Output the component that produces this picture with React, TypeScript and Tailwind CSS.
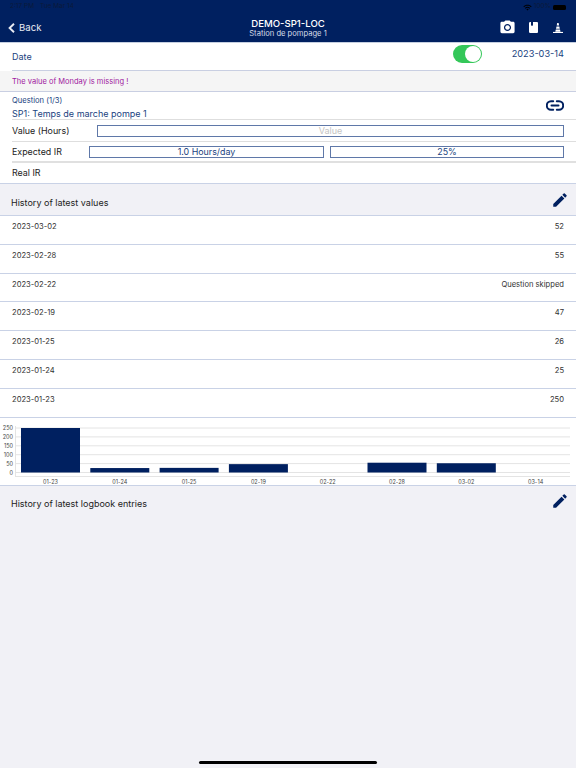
import React from "react";
import { MdEdit, MdPhotoCamera, MdWifi } from "react-icons/md";

const history: [string, string][] = [
  ["2023-03-02", "52"],
  ["2023-02-28", "55"],
  ["2023-02-22", "Question skipped"],
  ["2023-02-19", "47"],
  ["2023-01-25", "26"],
  ["2023-01-24", "25"],
  ["2023-01-23", "250"],
];

const bars: [string, number][] = [
  ["01-23", 250],
  ["01-24", 25],
  ["01-25", 26],
  ["02-19", 47],
  ["02-22", 0],
  ["02-28", 55],
  ["03-02", 52],
  ["03-14", 0],
];

function Chart() {
  const y0 = 54.5;
  const scale = 44.5 / 250;
  return (
    <svg width="576" height="67" viewBox="0 0 576 67" className="block">
      {[0, 50, 100, 150, 200, 250].map((v) => {
        const y = y0 - v * scale;
        return (
          <g key={v}>
            <line x1="15.5" x2="570" y1={y} y2={y} stroke="#e4e4e4" strokeWidth="1" />
            <text x="13" y={y + 2} textAnchor="end" fontSize="5.5" fill="#444" fontFamily="Inter, sans-serif">
              {v}
            </text>
          </g>
        );
      })}
      <line x1="15.5" x2="570" y1="58.5" y2="58.5" stroke="#e4e4e4" />
      <line x1="15.5" x2="15.5" y1="8" y2="59" stroke="#e4e4e4" />
      {bars.map(([label, v], i) => {
        const cx = 50.5 + i * 69.3;
        const h = v * scale;
        return (
          <g key={label}>
            {v > 0 && <rect x={cx - 29.5} y={y0 - h} width="59" height={h} fill="#002060" />}
            <text x={cx} y="66.2" textAnchor="middle" fontSize="5.5" fill="#444" fontFamily="Inter, sans-serif">
              {label}
            </text>
          </g>
        );
      })}
    </svg>
  );
}

function Book() {
  return (
    <svg width="9" height="11" viewBox="0 0 9 11">
      <path d="M1.3 0H8a1 1 0 0 1 1 1v9a1 1 0 0 1-1 1H1.3A1.3 1.3 0 0 1 0 9.7V1.3A1.3 1.3 0 0 1 1.3 0z" fill="#fff" />
      <path d="M2 0h2v4l-1-.8-1 .8z" fill="#002060" />
    </svg>
  );
}

function Cone() {
  return (
    <svg width="10" height="10" viewBox="0 0 10 10">
      <path d="M4.2 0h1.4l.5 2.6H3.7z" fill="#fff" />
      <path d="M3.5 3.4h2.8l.5 2.4H3z" fill="#fff" />
      <path d="M2.8 6.6h4.2l.5 2.2H2.3z" fill="#fff" />
      <path d="M0 8.9h10V10H0z" fill="#fff" />
    </svg>
  );
}

function LinkIcon() {
  return (
    <svg width="18" height="11" viewBox="0 0 18 11" fill="none" stroke="#002060" strokeWidth="2" strokeLinecap="round">
      <path d="M7.2 1.3H5a4.2 4.2 0 0 0 0 8.4h2.2" />
      <path d="M10.8 1.3H13a4.2 4.2 0 0 1 0 8.4h-2.2" />
      <path d="M5.5 5.5h7" />
    </svg>
  );
}

export default function App() {
  return (
    <div className="relative flex h-[768px] w-[576px] flex-col overflow-hidden bg-[#f1f1f6] font-['Inter',sans-serif]">
      <header className="relative h-[43px] shrink-0 border-b border-[#c5cfe0] bg-[#002060] text-white">
        <div className="flex h-[14px] items-center justify-between pl-[10px] pr-[10px] text-[6.5px] text-[#0b1a3a]">
          <span className="flex gap-[6px]">
            <span>2:17 PM</span>
            <span>Tue Mar 14</span>
          </span>
          <span className="flex items-center gap-[2px]">
            <MdWifi className="text-[9px] text-[#000]" />
            <span>100%</span>
            <span className="h-[5px] w-[13px] rounded-[1.5px] bg-black" />
          </span>
        </div>
        <div className="flex h-[27px] items-center justify-between pl-[8px] pr-[13px]">
          <div className="mt-[2px] flex items-center gap-[4px] text-[#e8ebf2]">
            <svg width="7" height="10" viewBox="0 0 7 10" fill="none" stroke="currentColor" strokeWidth="1.9">
              <path d="M6 0.7 1.6 5 6 9.3" />
            </svg>
            <span className="text-[9.6px]">Back</span>
          </div>
          <div className="flex items-center gap-[13px]">
            <MdPhotoCamera className="text-[17px]" />
            <Book />
            <span className="ml-[2px] block">
              <Cone />
            </span>
          </div>
        </div>
        <div className="absolute left-0 right-0 top-[18px] text-center">
          <div className="text-[9.6px] font-medium leading-[11px]">DEMO-SP1-LOC</div>
          <div className="text-[7.6px] leading-[10px] text-[#d5dbe8]">Station de pompage 1</div>
        </div>
      </header>

      <section className="bg-white">
        <div className="ml-[12px] flex h-[28px] items-center justify-between border-b border-[#c9cfe2] pr-[12px] text-[9px] text-[#1a3f80]">
          <span>Date</span>
          <div className="-mt-[5px] flex items-center gap-[30px] text-[9.2px]">
            <span className="flex h-[18px] w-[29px] items-center justify-end rounded-full bg-[#34c759] pr-[1px]">
              <span className="h-[16px] w-[16px] rounded-full bg-white" />
            </span>
            <span>2023-03-14</span>
          </div>
        </div>
      </section>

      <div className="flex h-[20px] items-center bg-[#f5f5f5] pl-[12px] pt-[1px] text-[7.5px] text-[#a020a0]">
        The value of Monday is missing !
      </div>

      <section className="border-t border-[#c9cfe2] bg-white">
        <div className="ml-[12px] flex h-[28px] items-center justify-between border-b border-[#dedede] pr-[12px] text-[#1a3f80]">
          <div className="pt-[4px]">
            <div className="text-[7.6px] leading-[10px]">Question (1/3)</div>
            <div className="mt-[2px] text-[9px] leading-[12px]">SP1: Temps de marche pompe 1</div>
          </div>
          <LinkIcon />
        </div>
        <div className="ml-[12px] flex h-[22px] items-center border-b border-[#dedede] pr-[12px] text-[8.9px] text-[#222]">
          <span className="w-[85px] shrink-0">Value (Hours)</span>
          <div className="flex h-[12px] flex-1 items-center justify-center border border-[#5f78a8] text-[9px] text-[#c4c4c4]">
            Value
          </div>
        </div>
        <div className="ml-[12px] flex h-[21px] items-center border-b-2 border-[#e0e0e0] pr-[12px] text-[8.9px] text-[#222]">
          <span className="w-[77px] shrink-0">Expected IR</span>
          <div className="flex h-[12px] w-[235px] items-center justify-center border border-[#5f78a8] text-[8.9px] text-[#1a3f80]">
            1.0 Hours/day
          </div>
          <div className="ml-[6px] flex h-[12px] flex-1 items-center justify-center border border-[#5f78a8] text-[8.9px] text-[#1a3f80]">
            25%
          </div>
        </div>
        <div className="ml-[12px] flex h-[20px] items-center text-[8.9px] text-[#222]">Real IR</div>
      </section>

      <div className="flex h-[33px] items-center justify-between border-y border-[#c9d2e6] pl-[11px] pr-[7px] text-[9px] text-[#222]">
        <span className="mt-[6px]">History of latest values</span>
        <MdEdit className="text-[18px] text-[#002060]" />
      </div>

      <section className="bg-white">
        {history.map(([d, v]) => (
          <div
            key={d}
            className="flex h-[28.8px] items-start justify-between border-b border-[#c9d2e6] px-[12px] pt-[5px] text-[7.6px] text-[#333]"
          >
            <span>{d}</span>
            <span>{v}</span>
          </div>
        ))}
        <Chart />
      </section>

      <div className="flex h-[32px] items-center justify-between border-t border-[#c9d2e6] pl-[11px] pr-[7px] text-[9px] text-[#222]">
        <span className="mt-[5px]">History of latest logbook entries</span>
        <MdEdit className="text-[18px] text-[#002060]" />
      </div>

      <div className="absolute bottom-[4px] left-[199px] h-[3px] w-[178px] rounded-full bg-black" />
    </div>
  );
}
